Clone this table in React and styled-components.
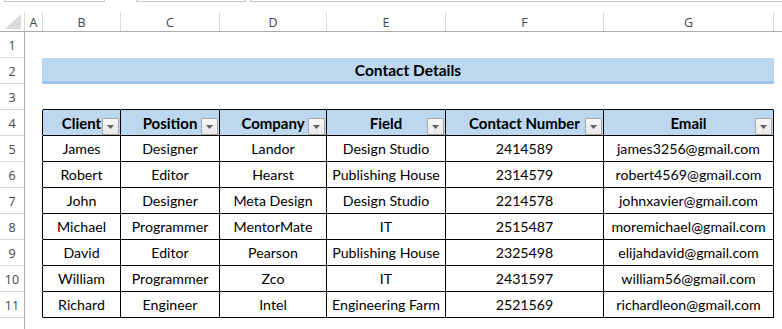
import styled, { createGlobalStyle } from "styled-components";

const COLS = "25px 18px 78px 99px 107px 119px 158px 170px 1fr";
const LETTERS = ["A", "B", "C", "D", "E", "F", "G"];
const HEADERS = ["Client", "Position", "Company", "Field", "Contact Number", "Email"];

const ROWS = [
  ["James", "Designer", "Landor", "Design Studio", "2414589", "james3256@gmail.com"],
  ["Robert", "Editor", "Hearst", "Publishing House", "2314579", "robert4569@gmail.com"],
  ["John", "Designer", "Meta Design", "Design Studio", "2214578", "johnxavier@gmail.com"],
  ["Michael", "Programmer", "MentorMate", "IT", "2515487", "moremichael@gmail.com"],
  ["David", "Editor", "Pearson", "Publishing House", "2325498", "elijahdavid@gmail.com"],
  ["William", "Programmer", "Zco", "IT", "2431597", "william56@gmail.com"],
  ["Richard", "Engineer", "Intel", "Engineering Farm", "2521569", "richardleon@gmail.com"],
];

const GlobalStyle = createGlobalStyle`
  body {
    margin: 0;
    background: #fff;
    overflow: hidden;
  }
`;

const App = () => {
  return (
    <>
      <GlobalStyle />
      <Sheet>
        <TopStrip>
          <BarBox $w="101px" />
          <BarBox $w="110px" $ml="31px" />
          <BarBox $ml="4px" $grow />
        </TopStrip>

        <ColHeaderRow>
          <Corner>
            <svg width="16" height="15" viewBox="0 0 16 15">
              <polygon points="16,0 16,15 0,15" fill="#dcdcdc" />
            </svg>
          </Corner>
          {LETTERS.map((l) => (
            <ColLetter key={l}>{l}</ColLetter>
          ))}
          <ColLetter $last />
        </ColHeaderRow>

        <SheetRow>
          <RowNum>1</RowNum>
        </SheetRow>

        <SheetRow>
          <RowNum>2</RowNum>
          <Cell />
          <TitleCell>Contact Details</TitleCell>
        </SheetRow>

        <SheetRow>
          <RowNum>3</RowNum>
          <Cell />
          {HEADERS.map((h) => (
            <Cell key={h} $topEdge />
          ))}
        </SheetRow>

        <SheetRow>
          <RowNum>4</RowNum>
          <Cell $leftEdge />
          {HEADERS.map((h) => (
            <Cell key={h} $boxed $head>
              {h}
              <FilterButton>
                <svg width="7" height="4" viewBox="0 0 7 4">
                  <polygon points="0,0 7,0 3.5,4" fill="#5f5f5f" />
                </svg>
              </FilterButton>
            </Cell>
          ))}
        </SheetRow>

        {ROWS.map((row, i) => (
          <SheetRow key={i}>
            <RowNum>{i + 5}</RowNum>
            <Cell $leftEdge />
            {row.map((v, j) => (
              <Cell key={j} $boxed>
                {v}
              </Cell>
            ))}
          </SheetRow>
        ))}

        <SheetRow>
          <RowNum $open />
        </SheetRow>
      </Sheet>
    </>
  );
};

export default App;

const Sheet = styled.div`
  width: 782px;
  height: 329px;
  overflow: hidden;
  background: #fff;
  font-family: Lato, "Liberation Sans", sans-serif;
`;

const TopStrip = styled.div`
  height: 12px;
  display: flex;
  align-items: flex-start;
  padding-left: 4px;
  margin-right: -2px;
`;

const BarBox = styled.div`
  box-sizing: border-box;
  height: 2px;
  width: ${(p) => p.$w || "auto"};
  flex: ${(p) => (p.$grow ? 1 : "none")};
  margin-left: ${(p) => p.$ml || 0};
  border: 1px solid #c8c8c8;
  border-top: none;
`;

const ColHeaderRow = styled.div`
  display: grid;
  grid-template-columns: ${COLS};
  height: 20px;
  box-sizing: border-box;
  border-bottom: 1px solid #ababab;
`;

const Corner = styled.div`
  box-sizing: border-box;
  border-right: 1px solid #d8d8d8;
  display: flex;
  align-items: flex-end;
  justify-content: flex-end;
  padding: 0 3px 2px 0;
`;

const ColLetter = styled.div`
  box-sizing: border-box;
  border-right: 1px solid ${(p) => (p.$last ? "transparent" : "#dadada")};
  display: flex;
  align-items: center;
  justify-content: center;
  padding-top: 1px;
  font-family: "Open Sans", "Noto Sans", sans-serif;
  font-size: 12.5px;
  color: #444;
`;

const SheetRow = styled.div`
  display: grid;
  grid-template-columns: ${COLS};
  height: 26px;
`;

const RowNum = styled.div`
  box-sizing: border-box;
  border-right: 1px solid #ababab;
  border-bottom: 1px solid ${(p) => (p.$open ? "transparent" : "#dadada")};
  display: flex;
  align-items: center;
  justify-content: center;
  padding-top: 1px;
  font-family: "Open Sans", "Noto Sans", sans-serif;
  font-size: 12.5px;
  color: #444;
`;

const Cell = styled.div`
  position: relative;
  box-sizing: border-box;
  display: flex;
  align-items: center;
  justify-content: center;
  white-space: nowrap;
  font-size: ${(p) => (p.$head ? "15px" : "14.2px")};
  font-weight: ${(p) => (p.$head ? 700 : 400)};
  color: #000;
  background: ${(p) => (p.$head ? "#bdd7ee" : "transparent")};
  border-right: 1px solid
    ${(p) => (p.$boxed || p.$leftEdge ? "#000" : "transparent")};
  border-bottom: 1px solid
    ${(p) => (p.$boxed || p.$topEdge ? "#000" : "transparent")};
`;

const TitleCell = styled.div`
  grid-column: 3 / 9;
  margin-left: -1px;
  box-sizing: border-box;
  height: 26px;
  display: flex;
  align-items: center;
  justify-content: center;
  background: #bdd7ee;
  border-bottom: 3px solid #9dc3e6;
  padding-top: 1px;
  font-size: 15.5px;
  font-weight: 700;
  color: #000;
`;

const FilterButton = styled.span`
  position: absolute;
  right: 1px;
  bottom: 0;
  width: 17px;
  height: 17px;
  box-sizing: border-box;
  border: 1px solid #a9a9a9;
  background: linear-gradient(#f7f7f7, #e8e8e8);
  display: flex;
  align-items: center;
  justify-content: center;
  padding-top: 1px;
`;
